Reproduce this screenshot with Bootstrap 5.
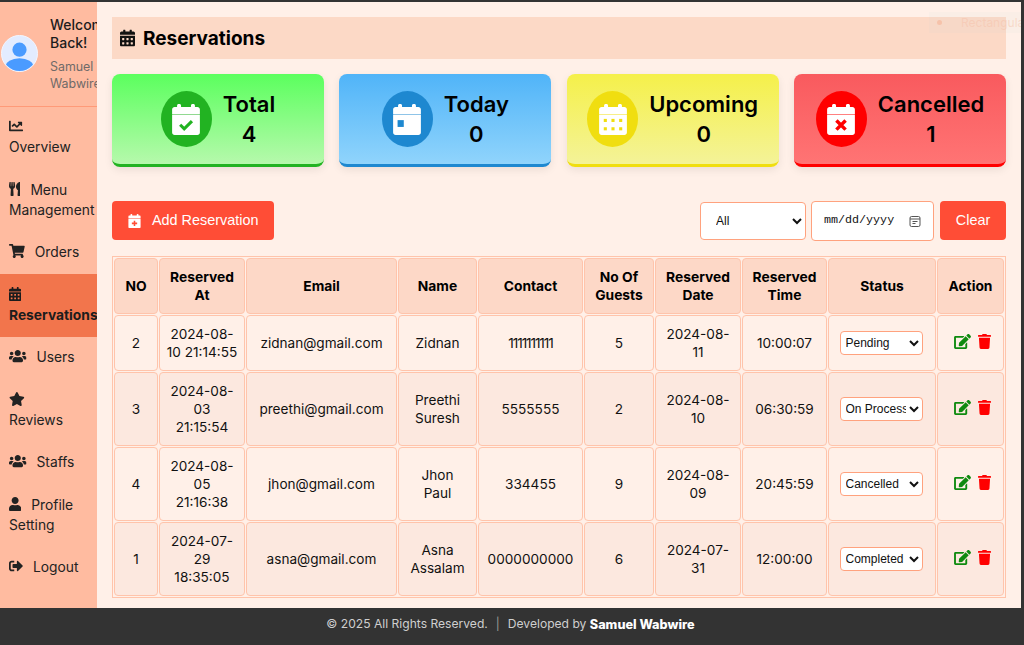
<!DOCTYPE html>
<html lang="en">
<head>
    <meta charset="UTF-8">
    <title>Reservations</title>
    <meta name="viewport" content="width=device-width, initial-scale=1">
    <link href="https://cdn.jsdelivr.net/npm/bootstrap@5.3.2/dist/css/bootstrap.min.css" rel="stylesheet">
    <style>
        html, body { height: 100%; }
        body {
            overflow: hidden;
            background: #fff0e8;
            font-family: Inter, "Open Sans", sans-serif;
            color: #111;
            border-top: 2px solid #333;
            border-right: 3px solid #333;
        }
        svg { fill: currentColor; display: inline-block; flex: none; }

        .app-wrap { height: 606px; }

        /* sidebar */
        .side-bar { width: 97px; flex: none; background: #ffbba0; overflow: hidden; }
        .side-user { height: 105px; border-bottom: 1px solid #ff9a78; padding-left: 1px; padding-top: 14px; gap: 12px; }
        .side-avatar { width: 37px; height: 37px; border-radius: 50%; background: #e3ecff; overflow: hidden; border: 1px solid #f3f6ff; flex: none; margin-top: 19px; }
        .side-hello { width: 60px; flex: none; font-size: 14px; line-height: 18px; font-weight: 500; color: #1c1c1c; }
        .side-name { font-size: 12.4px; line-height: 17px; font-weight: 400; color: #6f6a68; margin-top: 6px; }
        .side-link { display: block; color: #222; text-decoration: none; font-size: 13.8px; line-height: 20px; padding-left: 9px; white-space: nowrap; }
        .side-link svg { height: 14px; vertical-align: -1px; }
        .side-link .lbl { margin-left: 10px; }
        .side-link.two-line { padding-top: 10px; padding-bottom: 13px; }
        .side-link.one-line { padding-top: 9px; padding-bottom: 13px; }
        .side-link.one-line.side-tight { padding-bottom: 12px; }
        .side-link.one-line.side-mid { padding-top: 10px; }
        .side-link.active-item { background: #f2754c; font-weight: 700; padding-top: 11px; padding-bottom: 12px; color: #1c1c1c; }

        /* main */
        .main-area { flex: 1; min-width: 0; padding: 15px 15px 0 15px; position: relative; }
        .page-head { height: 42px; background: #fcd9c6; padding-left: 8px; gap: 8px; }
        .page-head svg { width: 15px; height: 18px; }
        .page-head h1 { font-size: 19px; font-weight: 700; margin: 2px 0 0; color: #000; }
        .ghost-tag { position: absolute; top: 10px; left: 832px; width: 92px; height: 21px; background: rgba(190, 215, 215, .07); font-size: 12px; line-height: 21px; padding-left: 32px; color: rgba(245, 190, 165, .45); overflow: hidden; white-space: nowrap; }
        .ghost-tag::before { content: ""; position: absolute; left: 8px; top: 8px; width: 5px; height: 5px; border-radius: 50%; background: rgba(245, 180, 150, .6); }

        .stat-grid { display: grid; grid-template-columns: repeat(4, 1fr); gap: 15.33px; margin-top: 15px; }
        .stat-box { height: 93px; border-radius: 8px; border-bottom: 3px solid; box-shadow: 0 3px 8px rgba(0, 0, 0, .08); gap: 11px; }
        .stat-circle { width: 51px; height: 56px; border-radius: 50%; color: #fff; }
        .stat-circle svg { width: 28px; height: 31px; }
        .stat-text { text-align: center; color: #000; font-weight: 600; font-size: 22px; line-height: 30px; }
        .stat-green { background: linear-gradient(#5bff5e, #b6f9ac); border-color: #22b322; }
        .stat-green .stat-circle { background: #22b322; }
        .stat-blue { background: linear-gradient(#50b4f8, #90d4fc); border-color: #1e88d0; }
        .stat-blue .stat-circle { background: #1e88d0; }
        .stat-yellow { background: linear-gradient(#f5f04a, #f4f398); border-color: #f0de10; }
        .stat-yellow .stat-circle { background: #f0de10; }
        .stat-red { background: linear-gradient(#f95a5e, #ff7474); border-color: #f00; }
        .stat-red .stat-circle { background: #f00; }

        .tool-row { margin-top: 34px; height: 40px; }
        .btn-coral { background: #ff4d36; border: 0; color: #fff; font-family: "Liberation Sans", sans-serif; font-size: 14.4px; border-radius: 4px; }
        .btn-coral:hover { background: #ff4d36; color: #fff; }
        .btn-add { width: 162px; height: 39px; gap: 11px; padding: 1px 0 0 16px; }
        .btn-add svg { width: 13px; height: 14px; }
        .btn-clear { width: 66px; height: 39px; margin-left: 6px; padding-top: 7px; }
        .pick-select, .pick-date { background: #fff; border: 1px solid #ffa27e; border-radius: 4px; color: #111; }
        .pick-select { width: 106px; height: 38px; margin-top: 1px; font-family: "Liberation Sans", sans-serif; font-size: 12px; padding-left: 11px; }
        .pick-date { width: 123px; height: 40px; margin-left: 5px; font-family: "Liberation Mono", monospace; font-size: 11.7px; padding: 0 10px 0 12px; }
        .pick-date::-webkit-calendar-picker-indicator {
            background: url("data:image/svg+xml,%3Csvg xmlns='http://www.w3.org/2000/svg' viewBox='0 0 12 12'%3E%3Crect x='1' y='1.500' width='10' height='10' rx='1.500' fill='none' stroke='%23555' stroke-width='1'/%3E%3Cpath d='M1 4h10M3.500 6.500h5M3.500 8.500h3' stroke='%23555' stroke-width='1'/%3E%3C/svg%3E") center / 12px 12px no-repeat;
        }

        /* table */
        .res-table { table-layout: fixed; width: 894px; margin: 15px 0 0; border-collapse: separate; border-spacing: 1px; border: 1px solid #ffc4ab; font-size: 13.6px; color: #111; }
        .res-table th, .res-table td { border: 1px solid #ffc4ab; border-radius: 4px; padding: 0 2px; text-align: center; vertical-align: middle; line-height: 18px; color: #111; box-shadow: none; }
        .res-table th { background: #fdd8c7; font-weight: 700; font-size: 13.8px; height: 56px; color: #000; }
        .res-table td { height: 74px; background: #fce8df; }
        .res-table tbody tr:first-child td { height: 56px; }
        .res-table tbody tr:nth-child(odd) td { background: #fff0e8; }
        .c-no { width: 44px; } .c-at { width: 86px; } .c-mail { width: 151px; } .c-name { width: 79px; } .c-tel { width: 105px; }
        .c-guests { width: 70px; } .c-date { width: 86px; } .c-time { width: 85px; } .c-status { width: 108px; } .c-act { width: 67px; }
        .tight-num { letter-spacing: -1.1px; }
        .status-pick { width: 83px; height: 24px; margin-left: -2px; background: #fff; border: 1px solid #ffa27e; border-radius: 4px; font-family: "Liberation Sans", sans-serif; font-size: 12px; color: #111; padding-left: 1px; }
        .act-wrap { gap: 7px; margin-top: -3px; padding-left: 4px; }
        .act-edit { width: 17px; height: 15px; color: #0f8a0f; }
        .act-del { width: 13px; height: 15px; color: #f00; }

        .foot-bar { height: 37px; background: #333; color: #cfcfcf; font-size: 12.1px; padding-bottom: 4px; }
        .foot-bar strong { color: #fff; font-weight: 800; font-size: 12.7px; }
        .foot-sep { margin: 0 8px; color: #999; }
    </style>
</head>
<body>
    <svg width="0" height="0" class="position-absolute">
        <symbol id="ic-cal" viewBox="0 0 448 512"><path d="M0 464c0 26.5 21.5 48 48 48h352c26.5 0 48-21.5 48-48V192H0v272zm320-196c0-6.6 5.4-12 12-12h40c6.6 0 12 5.4 12 12v40c0 6.6-5.4 12-12 12h-40c-6.6 0-12-5.4-12-12v-40zm0 128c0-6.6 5.4-12 12-12h40c6.6 0 12 5.4 12 12v40c0 6.6-5.4 12-12 12h-40c-6.6 0-12-5.4-12-12v-40zM192 268c0-6.6 5.4-12 12-12h40c6.6 0 12 5.4 12 12v40c0 6.6-5.4 12-12 12h-40c-6.6 0-12-5.4-12-12v-40zm0 128c0-6.6 5.4-12 12-12h40c6.6 0 12 5.4 12 12v40c0 6.6-5.4 12-12 12h-40c-6.6 0-12-5.4-12-12v-40zM64 268c0-6.6 5.4-12 12-12h40c6.6 0 12 5.4 12 12v40c0 6.6-5.4 12-12 12H76c-6.6 0-12-5.4-12-12v-40zm0 128c0-6.6 5.4-12 12-12h40c6.6 0 12 5.4 12 12v40c0 6.6-5.4 12-12 12H76c-6.6 0-12-5.4-12-12v-40zM400 64h-48V16c0-8.8-7.2-16-16-16h-32c-8.8 0-16 7.2-16 16v48H160V16c0-8.8-7.2-16-16-16h-32c-8.8 0-16 7.2-16 16v48H48C21.5 64 0 85.500 0 112v48h448v-48c0-26.500-21.500-48-48-48z"/></symbol>
        <symbol id="ic-blank" viewBox="0 0 448 500"><path d="M0 175h448v285c0 22-18 40-40 40H40c-22 0-40-18-40-40zM40 50h40V24c0-13 11-24 24-24h16c13 0 24 11 24 24v26h160V24c0-13 11-24 24-24h16c13 0 24 11 24 24v26h40c22 0 40 18 40 40v75H0V90c0-22 18-40 40-40z"/></symbol>
        <symbol id="ic-users" viewBox="0 0 640 512"><path d="M96 224c35.3 0 64-28.7 64-64s-28.7-64-64-64-64 28.7-64 64 28.7 64 64 64zm448 0c35.3 0 64-28.7 64-64s-28.7-64-64-64-64 28.7-64 64 28.7 64 64 64zm32 32h-64c-17.6 0-33.5 7.1-45.1 18.6 40.3 22.1 68.9 62 75.1 109.4h66c17.7 0 32-14.3 32-32v-32c0-35.3-28.7-64-64-64zm-256 0c61.9 0 112-50.1 112-112S381.9 32 320 32 208 82.1 208 144s50.1 112 112 112zm76.8 32h-8.3c-20.8 10-43.9 16-68.5 16s-47.6-6-68.5-16h-8.3C179.6 288 128 339.6 128 403.2V432c0 26.5 21.5 48 48 48h288c26.5 0 48-21.5 48-48v-28.8c0-63.6-51.6-115.2-115.2-115.2zm-223.7-13.4C161.5 263.1 145.6 256 128 256H64c-35.3 0-64 28.7-64 64v32c0 17.7 14.3 32 32 32h65.9c6.3-47.4 34.9-87.3 75.2-109.4z"/></symbol>
        <symbol id="ic-edit" viewBox="0 0 576 512"><path d="M402.6 83.2l90.2 90.2c3.8 3.8 3.8 10 0 13.8L274.4 405.6l-92.8 10.3c-12.4 1.4-22.9-9.1-21.5-21.5l10.3-92.8L388.8 83.2c3.8-3.8 10-3.8 13.8 0zm162-22.9l-48.8-48.8c-15.2-15.2-39.9-15.2-55.2 0l-35.4 35.4c-3.8 3.8-3.8 10 0 13.8l90.2 90.2c3.8 3.8 10 3.8 13.8 0l35.4-35.4c15.2-15.3 15.2-40 0-55.2zM384 346.2V448H64V128h229.8c3.2 0 6.2-1.3 8.5-3.5l40-40c7.6-7.6 2.2-20.5-8.5-20.5H48C21.5 64 0 85.5 0 112v352c0 26.5 21.5 48 48 48h352c26.5 0 48-21.5 48-48V306.2c0-10.7-12.9-16-20.5-8.5l-40 40c-2.2 2.3-3.5 5.3-3.5 8.5z"/></symbol>
        <symbol id="ic-trash" viewBox="0 0 448 512"><path d="M432 32H312l-9.4-18.7A24 24 0 0 0 281.1 0H166.8a23.72 23.72 0 0 0-21.4 13.3L136 32H16A16 16 0 0 0 0 48v32a16 16 0 0 0 16 16h416a16 16 0 0 0 16-16V48a16 16 0 0 0-16-16zM53.2 467a48 48 0 0 0 47.9 45h245.8a48 48 0 0 0 47.9-45L416 128H32z"/></symbol>
    </svg>

    <div class="app-wrap d-flex">
        <aside class="side-bar">
            <div class="side-user d-flex">
                <div class="side-avatar">
                    <svg viewBox="0 0 37 37" width="35" height="35"><circle cx="18.500" cy="14.500" r="7.500" fill="#4a9bff"/><ellipse cx="18.500" cy="33" rx="15" ry="9.500" fill="#4a9bff"/></svg>
                </div>
                <div class="side-hello">
                    Welcome Back!
                    <div class="side-name">Samuel Wabwire</div>
                </div>
            </div>
            <nav>
                <a class="side-link two-line" href="#"><svg viewBox="0 0 512 512"><path d="M496 384H64V80c0-8.840-7.160-16-16-16H16C7.160 64 0 71.160 0 80v336c0 17.670 14.330 32 32 32h464c8.840 0 16-7.160 16-16v-32c0-8.840-7.160-16-16-16zM464 96H345.940c-21.380 0-32.090 25.850-16.970 40.970l32.400 32.400L288 242.750l-73.370-73.370c-12.500-12.500-32.760-12.500-45.250 0l-68.690 68.690c-6.250 6.250-6.250 16.380 0 22.630l22.620 22.620c6.250 6.250 16.380 6.250 22.630 0L192 237.250l73.370 73.370c12.500 12.500 32.760 12.500 45.250 0l96-96 32.400 32.400c15.120 15.120 40.970 4.410 40.970-16.970V112c.01-8.840-7.150-16-15.990-16z"/></svg><br>Overview</a>
                <a class="side-link two-line" href="#"><svg viewBox="0 0 416 512"><path d="M207.900 15.200c.8 4.700 16.100 94.500 16.100 128.800 0 52.300-27.800 89.600-68.900 104.600L168 486.700c.7 13.700-10.200 25.300-24 25.300H80c-13.700 0-24.700-11.500-24-25.300l12.900-238.100C27.700 233.600 0 196.200 0 144 0 109.600 15.300 19.900 16.100 15.200 19.300-5.100 61.400-5.400 64 16.300v141.200c1.300 3.400 15.100 3.200 16 0 1.400-25.300 7.900-139.200 8-141.800 3.300-20.800 44.700-20.800 47.900 0 .2 2.700 6.600 116.500 8 141.800.9 3.200 14.800 3.400 16 0V16.300c2.600-21.600 44.800-21.400 48-1.100zm119.200 285.700l-15 185.100c-1.200 14 9.900 26 23.900 26h56c13.300 0 24-10.700 24-24V24c0-13.200-10.700-24-24-24-82.500 0-221.400 178.500-64.900 300.900z"/></svg><span class="lbl">Menu</span><br>Management</a>
                <a class="side-link one-line side-tight" href="#"><svg viewBox="0 0 576 512"><path d="M528.120 301.319l47.273-208C578.806 78.301 567.391 64 551.990 64H159.208l-9.166-44.810C147.758 8.021 137.930 0 126.529 0H24C10.745 0 0 10.745 0 24v16c0 13.255 10.745 24 24 24h69.883l70.248 343.435C147.325 417.100 136 435.222 136 456c0 30.928 25.072 56 56 56s56-25.072 56-56c0-15.674-6.447-29.835-16.824-40h209.647C430.447 426.165 424 440.326 424 456c0 30.928 25.072 56 56 56s56-25.072 56-56c0-22.172-12.888-41.332-31.579-50.405l5.517-24.276c3.413-15.018-8.002-29.319-23.403-29.319H218.117l-6.545-32h293.145c11.206 0 20.920-7.754 23.403-18.681z"/></svg><span class="lbl">Orders</span></a>
                <a class="side-link active-item" href="#"><svg viewBox="0 0 448 512"><use href="#ic-cal"/></svg><br>Reservations</a>
                <a class="side-link one-line side-mid" href="#"><svg viewBox="0 0 640 512"><use href="#ic-users"/></svg><span class="lbl">Users</span></a>
                <a class="side-link two-line" href="#"><svg viewBox="0 0 576 512"><path d="M259.300 17.800L194 150.200 47.900 171.500c-26.200 3.800-36.700 36.100-17.700 54.600l105.700 103-25 145.500c-4.500 26.300 23.200 46 46.400 33.700L288 439.600l130.700 68.700c23.200 12.200 50.900-7.400 46.400-33.700l-25-145.500 105.700-103c19-18.500 8.500-50.800-17.700-54.600L382 150.200 316.700 17.800c-11.700-23.600-45.600-23.900-57.400 0z"/></svg><br>Reviews</a>
                <a class="side-link one-line" href="#"><svg viewBox="0 0 640 512"><use href="#ic-users"/></svg><span class="lbl">Staffs</span></a>
                <a class="side-link two-line" href="#"><svg viewBox="0 0 448 512"><path d="M224 256c70.700 0 128-57.300 128-128S294.700 0 224 0 96 57.300 96 128s57.300 128 128 128zm89.600 32h-16.700c-22.200 10.200-46.900 16-72.900 16s-50.600-5.800-72.900-16h-16.700C60.200 288 0 348.200 0 422.400V464c0 26.500 21.500 48 48 48h352c26.500 0 48-21.500 48-48v-41.600c0-74.200-60.200-134.400-134.400-134.400z"/></svg><span class="lbl">Profile</span><br>Setting</a>
                <a class="side-link one-line" href="#"><svg viewBox="0 0 512 512"><path d="M497 273L329 441c-15 15-41 4.500-41-17v-96H152c-13.300 0-24-10.700-24-24v-96c0-13.300 10.700-24 24-24h136V88c0-21.400 25.900-32 41-17l168 168c9.300 9.400 9.300 24.600 0 34zM192 436v-40c0-6.600-5.400-12-12-12H96c-17.700 0-32-14.300-32-32V160c0-17.700 14.300-32 32-32h84c6.600 0 12-5.400 12-12V76c0-6.600-5.400-12-12-12H96c-53 0-96 43-96 96v192c0 53 43 96 96 96h84c6.600 0 12-5.400 12-12z"/></svg><span class="lbl">Logout</span></a>
            </nav>
        </aside>

        <main class="main-area">
            <div class="ghost-tag">Rectangular</div>
            <div class="page-head d-flex align-items-center">
                <svg viewBox="0 0 448 512"><use href="#ic-cal"/></svg>
                <h1>Reservations</h1>
            </div>

            <div class="stat-grid">
                <div class="stat-box stat-green d-flex align-items-center justify-content-center">
                    <div class="stat-circle d-flex align-items-center justify-content-center">
                        <svg viewBox="0 0 448 500"><use href="#ic-blank"/><path d="M130 335l65 65 125-125" fill="none" stroke="#22b322" stroke-width="50"/></svg>
                    </div>
                    <div class="stat-text">Total<br>4</div>
                </div>
                <div class="stat-box stat-blue d-flex align-items-center justify-content-center">
                    <div class="stat-circle d-flex align-items-center justify-content-center">
                        <svg viewBox="0 0 448 500"><use href="#ic-blank"/><rect x="72" y="260" width="100" height="110" fill="#1e88d0"/></svg>
                    </div>
                    <div class="stat-text">Today<br>0</div>
                </div>
                <div class="stat-box stat-yellow d-flex align-items-center justify-content-center">
                    <div class="stat-circle d-flex align-items-center justify-content-center">
                        <svg viewBox="0 0 448 500"><use href="#ic-blank"/><g fill="#f0de10"><rect x="75" y="240" width="50" height="50"/><rect x="199" y="240" width="50" height="50"/><rect x="323" y="240" width="50" height="50"/><rect x="75" y="375" width="50" height="50"/><rect x="199" y="375" width="50" height="50"/><rect x="323" y="375" width="50" height="50"/></g></svg>
                    </div>
                    <div class="stat-text">Upcoming<br>0</div>
                </div>
                <div class="stat-box stat-red d-flex align-items-center justify-content-center">
                    <div class="stat-circle d-flex align-items-center justify-content-center">
                        <svg viewBox="0 0 448 500"><use href="#ic-blank"/><path d="M150 265l148 148m0-148L150 413" fill="none" stroke="#f00" stroke-width="56"/></svg>
                    </div>
                    <div class="stat-text">Cancelled<br>1</div>
                </div>
            </div>

            <div class="tool-row d-flex align-items-start">
                <button type="button" class="btn btn-coral btn-add d-flex align-items-center">
                    <svg viewBox="0 0 448 500"><use href="#ic-blank"/><path d="M224 240v190M129 335h190" fill="none" stroke="#ff4d36" stroke-width="56"/></svg>
                    Add Reservation
                </button>
                <div class="ms-auto d-flex align-items-start">
                    <select class="pick-select"><option>All</option></select>
                    <input type="date" class="pick-date">
                    <button type="button" class="btn btn-coral btn-clear">Clear</button>
                </div>
            </div>

            <table class="table res-table">
                <colgroup>
                    <col class="c-no"><col class="c-at"><col class="c-mail"><col class="c-name"><col class="c-tel">
                    <col class="c-guests"><col class="c-date"><col class="c-time"><col class="c-status"><col class="c-act">
                </colgroup>
                <thead>
                    <tr><th>NO</th><th>Reserved<br>At</th><th>Email</th><th>Name</th><th>Contact</th><th>No Of<br>Guests</th><th>Reserved<br>Date</th><th>Reserved<br>Time</th><th>Status</th><th>Action</th></tr>
                </thead>
                <tbody>
                    <tr>
                        <td>2</td><td>2024-08-<br>10 21:14:55</td><td>zidnan@gmail.com</td><td>Zidnan</td><td class="tight-num">1111111111</td><td>5</td><td>2024-08-<br>11</td><td>10:00:07</td>
                        <td><select class="status-pick"><option>Pending</option></select></td>
                        <td><div class="act-wrap d-flex justify-content-center"><svg class="act-edit"><use href="#ic-edit"/></svg><svg class="act-del"><use href="#ic-trash"/></svg></div></td>
                    </tr>
                    <tr>
                        <td>3</td><td>2024-08-<br>03<br>21:15:54</td><td>preethi@gmail.com</td><td>Preethi<br>Suresh</td><td>5555555</td><td>2</td><td>2024-08-<br>10</td><td>06:30:59</td>
                        <td><select class="status-pick"><option>On Process</option></select></td>
                        <td><div class="act-wrap d-flex justify-content-center"><svg class="act-edit"><use href="#ic-edit"/></svg><svg class="act-del"><use href="#ic-trash"/></svg></div></td>
                    </tr>
                    <tr>
                        <td>4</td><td>2024-08-<br>05<br>21:16:38</td><td>jhon@gmail.com</td><td>Jhon<br>Paul</td><td>334455</td><td>9</td><td>2024-08-<br>09</td><td>20:45:59</td>
                        <td><select class="status-pick"><option>Cancelled</option></select></td>
                        <td><div class="act-wrap d-flex justify-content-center"><svg class="act-edit"><use href="#ic-edit"/></svg><svg class="act-del"><use href="#ic-trash"/></svg></div></td>
                    </tr>
                    <tr>
                        <td>1</td><td>2024-07-<br>29<br>18:35:05</td><td>asna@gmail.com</td><td>Asna<br>Assalam</td><td>0000000000</td><td>6</td><td>2024-07-<br>31</td><td>12:00:00</td>
                        <td><select class="status-pick"><option>Completed</option></select></td>
                        <td><div class="act-wrap d-flex justify-content-center"><svg class="act-edit"><use href="#ic-edit"/></svg><svg class="act-del"><use href="#ic-trash"/></svg></div></td>
                    </tr>
                </tbody>
            </table>
        </main>
    </div>

    <footer class="foot-bar d-flex align-items-center justify-content-center">
        © 2025 All Rights Reserved.<span class="foot-sep">|</span>Developed by&nbsp;<strong>Samuel Wabwire</strong>
    </footer>
</body>
</html>
